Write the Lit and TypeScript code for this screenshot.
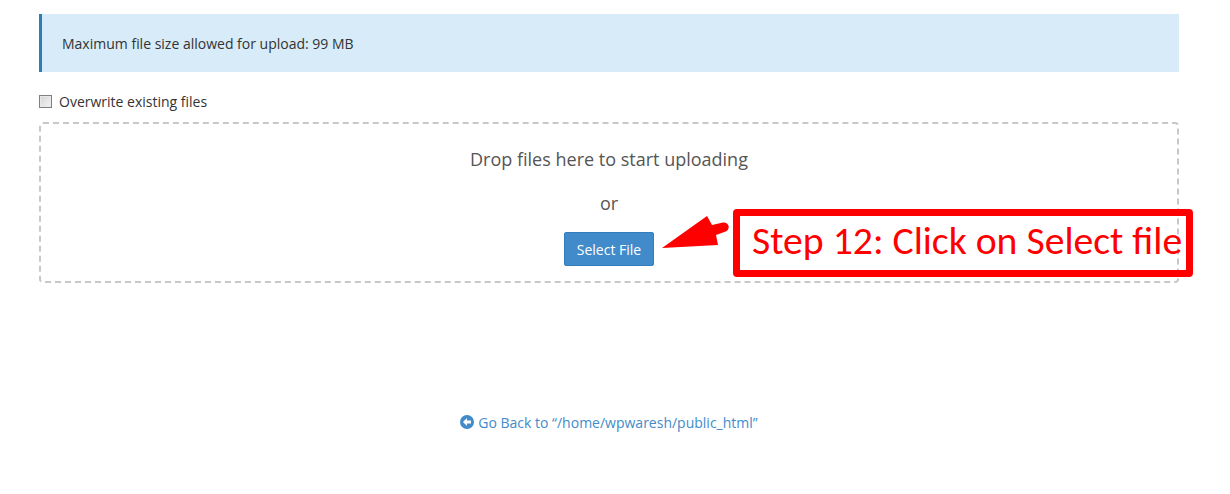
import { LitElement, html, css } from "lit";
import { customElement } from "lit/decorators.js";

@customElement("app-root")
export class AppRoot extends LitElement {
  static styles = css`
    :host { display: block; height: 494px; box-sizing: border-box; padding: 14px 51px 0 39px; font-family: "Open Sans", sans-serif; font-size: 14px; color: #333; position: relative; background: #fff; overflow: hidden; }
    .alert { height: 58px; box-sizing: border-box; background: #d7ecf8; border-left: 3px solid #2a7fba; padding-left: 20px; display: flex; align-items: center; color: #333; }
    .check { display: flex; align-items: center; height: 20px; margin-top: 19px; gap: 7px; color: #333; }
    .box { width: 13px; height: 13px; box-sizing: border-box; border: 1px solid #808080; background: linear-gradient(135deg, #d4d4d4, #f4f4f4); box-shadow: inset 0 0 0 1px #e8e8e8; }
    .drop { margin-top: 11px; height: 161px; box-sizing: border-box; border: 2px dashed #c8c8c8; border-radius: 4px; display: flex; flex-direction: column; align-items: center; color: #555; font-size: 18px; padding-top: 23px; }
    .drop .l { line-height: 24px; }
    .or { margin-top: 20px; }
    .btn { margin-top: 17px; width: 90px; height: 34px; box-sizing: border-box; background: #428bca; border: 1px solid #357ebd; border-radius: 2px; color: #fff; font-size: 14px; display: flex; align-items: center; justify-content: center; }
    .back { margin-top: 129px; display: flex; align-items: center; justify-content: center; gap: 4px; color: #428bca; height: 20px; }
    .callout { position: absolute; left: 733px; top: 209px; width: 460px; height: 68px; box-sizing: border-box; border: 7px solid #f00; border-radius: 4px; color: #f00; font-family: Carlito, Lato, sans-serif; font-size: 39.7px; white-space: nowrap; display: flex; align-items: center; padding: 0 0 5px 12px; }
    .arrow { position: absolute; left: 660px; top: 212px; }
  `;
  render() {
    return html`
      <div class="alert">Maximum file size allowed for upload: 99 MB</div>
      <div class="check"><span class="box"></span><span>Overwrite existing files</span></div>
      <div class="drop">
        <div class="l">Drop files here to start uploading</div>
        <div class="l or">or</div>
        <div class="btn">Select File</div>
      </div>
      <div class="back">
        <svg width="14" height="14" viewBox="0 0 14 14"><circle cx="7" cy="7" r="7" fill="#428bca"/><path d="M7 3 3 7l4 4V8.500h4v-3H7z" fill="#fff"/></svg>
        <span>Go Back to “/home/wpwaresh/public_html”</span>
      </div>
      <svg class="arrow" width="72" height="40" viewBox="0 0 72 40"><path d="M2 36 47 4l5 9 11-2.500a4.700 4.700 0 0 1 2 9.200L56 23l2 10z" fill="#f00"/></svg>
      <div class="callout">Step 12: Click on Select file</div>
    `;
  }
}
